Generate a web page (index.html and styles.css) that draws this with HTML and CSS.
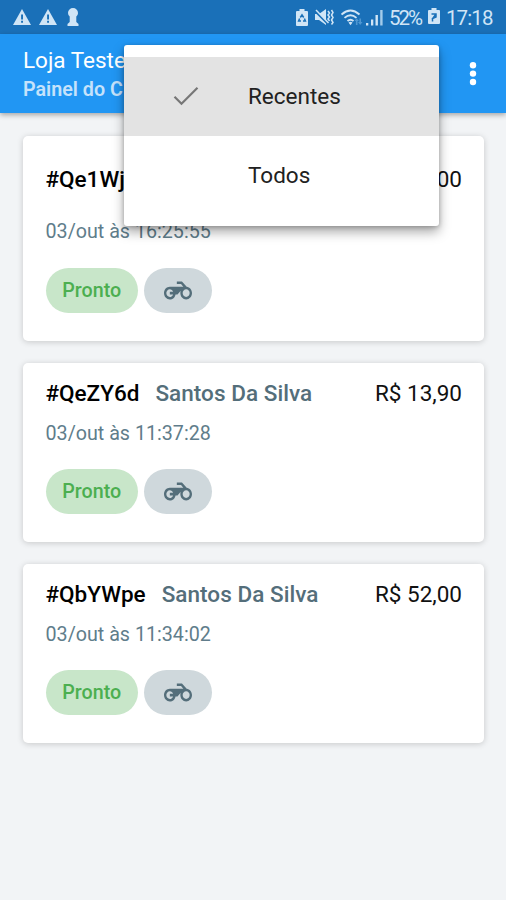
FILE: index.html
```html
<!DOCTYPE html>
<html lang="pt-BR">
<head>
<meta charset="utf-8">
<title>Loja Teste</title>
<link rel="stylesheet" href="styles.css">
</head>
<body>
<svg class="defs" width="0" height="0">
  <symbol id="moto" viewBox="0 0 24 24" preserveAspectRatio="none"><path d="M19.44 9.03L15.41 5H11v2h3.59l2 2H5c-2.8 0-5 2.2-5 5s2.2 5 5 5c2.46 0 4.45-1.69 4.9-4h1.65l2.77-2.77c-.21.54-.32 1.14-.32 1.77 0 2.8 2.2 5 5 5s5-2.2 5-5c0-2.65-1.97-4.77-4.56-4.97zM7.82 15C7.4 16.15 6.28 17 5 17c-1.63 0-3-1.37-3-3s1.37-3 3-3c1.28 0 2.4.85 2.82 2H5v2h2.82zM19 17c-1.66 0-3-1.34-3-3s1.34-3 3-3 3 1.34 3 3-1.34 3-3 3z"/></symbol>
  <symbol id="warn" viewBox="0 0 18 16"><path d="M9 0L18 16H0z"/><path class="cut" d="M8.1 5.5h1.9v5H8.1zM8.1 11.8h1.9v1.9H8.1z"/></symbol>
</svg>
<div class="status">
  <div class="status-left">
    <svg class="warn" width="18" height="16"><use href="#warn"/></svg>
    <svg class="warn" width="18" height="16"><use href="#warn"/></svg>
    <svg class="pawn" width="12" height="18" viewBox="0 0 12 18"><path d="M6 0a5 5 0 0 1 5 5c0 1.500-.7 2.700-1.700 3.500V14l2.200 2v2H.500v-2l2.200-2V8.500A4.500 4.500 0 0 1 1 5a5 5 0 0 1 5-5z"/></svg>
  </div>
  <div class="status-right">
    <svg class="recycle" width="12" height="17" viewBox="0 0 12 17"><path d="M3.500 0h5v2H11q1 0 1 1v13q0 1-1 1H1q-1 0-1-1V3q0-1 1-1h2.500z"/><path class="line" d="M4.300 8.500L6 5.800 7.700 8.500M3.600 9.500L2.600 12H5M8.400 9.500L9.400 12H7"/></svg>
    <svg class="mute" width="19" height="17" viewBox="0 0 19 17"><path d="M0 5h4L11 0v16l-7-5H0z"/><path class="slash" d="M0 2l14 14"/><path class="slash-light" d="M1 1l12.500 13"/><path class="wave" d="M13 2l1.500 2-1.500 2 1.500 2-1.500 2 1.500 2M16.500 1l1.500 2.500L16.500 6 18 8.500 16.500 11l1.500 2.500-1.500 2"/></svg>
    <svg class="wifi" width="22" height="17" viewBox="0 0 22 17"><path class="arc" d="M.500 5.500Q9.500-2.500 18.500 5.500M3.500 8.900q6-5.200 12 0M6.500 12q3-2.600 6 0"/><path d="M7.500 13.400q2-1.500 4 0l-2 2.800z"/><path class="dim" d="M13.500 12l2.200-2.800 2.200 2.800h-1.400v4h-1.600v-4zM17 13h1.400V9.500H20V13h1.500l-2.300 3z"/></svg>
    <svg class="signal" width="17" height="17" viewBox="0 0 17 17"><path d="M0 14h2.300v2.500H0zM5 10.500h2.300v6H5zM9.500 6h2.400v10.500H9.500z"/><path class="soft" d="M14.200 1h2.400v15.500h-2.400z"/></svg>
    <span class="pct">52%</span>
    <svg class="batt" width="12" height="18" viewBox="0 0 12 18"><path d="M3.500 0h5v2H11q1 0 1 1v12q0 1-1 1H1q-1 0-1-1V3q0-1 1-1h2.500z"/><path class="line" d="M3.500 6H8v3L4.500 10.500v3M8 6L4 11.500"/></svg>
    <span class="time">17:18</span>
  </div>
</div>
<header class="appbar">
  <div class="titles">
    <div class="title">Loja Teste</div>
    <div class="subtitle">Painel do C</div>
  </div>
  <svg class="more" width="8" height="26" viewBox="0 0 8 26"><circle cx="4" cy="4.200" r="3.200"/><circle cx="4" cy="12.600" r="3.200"/><circle cx="4" cy="21" r="3.200"/></svg>
</header>
<main class="orders">
  <article class="card tall">
    <div class="row"><span class="code">#Qe1Wj</span><span class="price">00</span></div>
    <div class="date">03/out às 16:25:55</div>
    <div class="chips"><span class="chip ready">Pronto</span><span class="chip delivery"><svg width="28" height="31"><use href="#moto"/></svg></span></div>
  </article>
  <article class="card">
    <div class="row"><span class="code">#QeZY6d</span><span class="name">Santos Da Silva</span><span class="price">R$ 13,90</span></div>
    <div class="date">03/out às 11:37:28</div>
    <div class="chips"><span class="chip ready">Pronto</span><span class="chip delivery"><svg width="28" height="31"><use href="#moto"/></svg></span></div>
  </article>
  <article class="card">
    <div class="row"><span class="code">#QbYWpe</span><span class="name">Santos Da Silva</span><span class="price">R$ 52,00</span></div>
    <div class="date">03/out às 11:34:02</div>
    <div class="chips"><span class="chip ready">Pronto</span><span class="chip delivery"><svg width="28" height="31"><use href="#moto"/></svg></span></div>
  </article>
</main>
<div class="menu">
  <div class="item selected"><svg class="check" width="26" height="20" viewBox="0 0 26 20"><path d="M1.500 10.800l7 7L24.500 1.800"/></svg><span>Recentes</span></div>
  <div class="item"><span>Todos</span></div>
</div>
</body>
</html>
```
FILE: styles.css
```css
* { box-sizing: border-box; }
body {
  margin: 0;
  height: 900px;
  overflow: hidden;
  background: #f2f4f6;
  font-family: Roboto, "Liberation Sans", sans-serif;
  color: #111;
}
svg { display: block; flex: none; }
.defs { position: absolute; }

.status {
  height: 34px;
  background: #1a70b8;
  display: flex;
  justify-content: space-between;
  padding: 0 13px 0 13px;
  color: #d0e5f6;
  fill: #d0e5f6;
}
.status-left, .status-right { display: flex; align-items: center; }
.status-left { gap: 8px; }
.pawn { margin-left: 2px; }
.cut { fill: #1a70b8; }
.line { fill: none; stroke: #1a70b8; stroke-width: 1.5; }
.slash { stroke: #1a70b8; stroke-width: 2; }
.slash-light { stroke: #d0e5f6; stroke-width: 1.5; }
.wave { fill: none; stroke: #d0e5f6; stroke-width: 1.5; }
.arc { fill: none; stroke: #d0e5f6; stroke-width: 1.9; }
.dim { fill: #4f97d2; }
.soft { fill: #a3cbea; }
.mute { margin-left: 7px; }
.wifi { margin-left: 7px; }
.signal { margin-left: 3px; }
.pct, .time { font-size: 20.5px; line-height: 34px; padding-top: 2px; }
.pct { margin-left: 6px; width: 34px; letter-spacing: -2px; }
.batt { margin-left: 5px; }
.time { margin-left: 6px; width: 47px; letter-spacing: -0.9px; }

.appbar {
  position: relative;
  height: 79px;
  background: #2196f3;
  box-shadow: 0 2px 5px rgba(0, 0, 0, .32);
  display: flex;
  justify-content: space-between;
  padding: 12px 29px 0 23px;
  color: #fff;
}
.title { font-size: 22.5px; line-height: 28px; }
.subtitle { margin-top: 2px; font-size: 19.7px; line-height: 28px; font-weight: 600; color: #c5e2fb; }
.more { fill: #fff; margin-top: 15px; }

.orders { display: flex; flex-direction: column; gap: 22px; padding: 23px 22px 0 23px; }
.card {
  height: 179px;
  border-radius: 5px;
  background: #fff;
  box-shadow: 0 1px 6px rgba(0, 0, 0, .18);
  padding: 16px 22px 0 22.5px;
}
.card.tall { height: 205px; padding-top: 29px; }
.row { display: flex; font-size: 22.5px; line-height: 28px; }
.code { font-weight: 500; color: #000; }
.name { font-weight: 500; color: #546e7a; margin-left: 16px; letter-spacing: 0.05px; }
.price { margin-left: auto; }
.date { margin-top: 14px; font-size: 19.7px; line-height: 26px; color: #607d8b; }
.tall .date { margin-top: 26px; }
.chips { display: flex; gap: 6px; margin-top: 22px; }
.tall .chips { margin-top: 23px; }
.chip { height: 45px; border-radius: 23px; display: flex; align-items: center; justify-content: center; }
.ready { width: 92.5px; background: #c8e6c9; color: #4caf50; font-size: 19.7px; font-weight: 500; }
.delivery { width: 67.5px; background: #cfd8dc; fill: #546e7a; }

.menu {
  position: absolute;
  left: 124px;
  top: 45px;
  width: 315px;
  height: 181px;
  padding: 12px 0;
  border-radius: 3px;
  background: #fff;
  box-shadow: 0 6px 12px rgba(0, 0, 0, .34), 0 1px 4px rgba(0, 0, 0, .22);
}
.item { position: relative; height: 78.5px; display: flex; align-items: center; padding-left: 124px; font-size: 22.5px; color: #212121; }
.selected { background: #e3e3e3; }
.check { margin: 0 49px 0 -75px; fill: none; stroke: #777; stroke-width: 2.2; }
```
